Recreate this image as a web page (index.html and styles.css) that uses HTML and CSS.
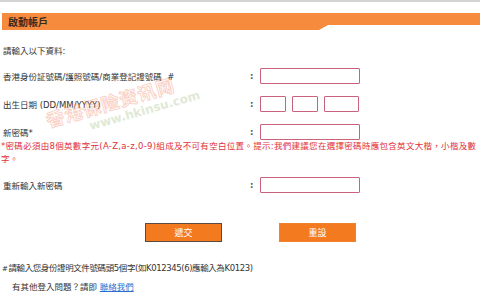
FILE: index.html
```html
<!DOCTYPE html>
<html lang="zh-Hant">
<head>
    <meta charset="UTF-8">
    <meta name="viewport" content="width=device-width, initial-scale=1.0">
    <title>啟動帳戶</title>
    <link rel="stylesheet" href="styles.css">
</head>
<body>
    <div class="topline"></div>
    <div class="page">
        <div class="header"><h2>啟動帳戶</h2></div>
        <p class="intro">請輸入以下資料:</p>
        <form id="activate-form">
            <div class="row">
                <label for="id-no">香港身份証號碼/護照號碼/商業登記證號碼&nbsp; #</label>
                <span class="colon">:</span>
                <input type="text" id="id-no" class="field">
            </div>
            <div class="row">
                <label for="dob-dd">出生日期 (DD/MM/YYYY)</label>
                <span class="colon">:</span>
                <div class="date-group">
                    <input type="text" id="dob-dd" class="field dd">
                    <input type="text" id="dob-mm" class="field mm">
                    <input type="text" id="dob-yy" class="field yy">
                </div>
            </div>
            <div class="row">
                <label for="new-pw">新密碼*</label>
                <span class="colon">:</span>
                <input type="password" id="new-pw" class="field">
            </div>
            <p class="note">*密碼必須由8個英數字元(A-Z,a-z,0-9)組成及不可有空白位置。提示:我們建議您在選擇密碼時應包含英文大楷，小楷及數字。</p>
            <div class="row">
                <label for="re-pw">重新輸入新密碼</label>
                <span class="colon">:</span>
                <input type="password" id="re-pw" class="field">
            </div>
            <div class="buttons">
                <button type="submit" class="btn btn-submit">遞交</button>
                <button type="reset" class="btn">重設</button>
            </div>
        </form>
        <p class="footnote"><span class="hash">#</span>請輸入您身份證明文件號碼頭5個字(如K012345(6)應輸入為K0123)</p>
        <p class="help">有其他登入問題？請即 <a href="#">聯絡我們</a></p>

        <!-- watermark from the source image -->
        <div class="watermark">
            <span class="wm-cn">香港保险资讯网</span>
            <span class="wm-url">www.hkinsu.com</span>
        </div>
    </div>
</body>
</html>
```

FILE: styles.css
```css
body {
    font-family: "DejaVu Sans", "Noto Sans CJK TC", sans-serif;
    font-size: 8.5px;
    color: #333333;
    background-color: #ffffff;
    margin: 0;
    padding: 0;
}

.topline {
    height: 2px;
    background-color: #d4d4d4;
}

.page {
    position: relative;
}

.header {
    margin: 11px 0 0 2px;
    height: 17px;
    background-color: #f68a3d;
    clip-path: polygon(0 0, 100% 0, 100% 12px, 326px 12px, 317px 100%, 0 100%);
}

.header h2 {
    margin: 0;
    padding-left: 6px;
    font-family: "Noto Sans CJK TC", sans-serif;
    font-size: 10px;
    line-height: 17px;
    color: #3a2a1e;
}

.intro {
    margin: 15px 0 0 3px;
    line-height: 13px;
}

.row {
    display: grid;
    grid-template-columns: 245px 12px 1fr;
    align-items: center;
    padding-left: 3px;
    margin-top: 10px;
}

.row + .row {
    margin-top: 12px;
}

.colon {
    padding-left: 2px;
    font-weight: bold;
    color: #555;
}

.field {
    box-sizing: border-box;
    width: 100px;
    height: 16px;
    margin: 0;
    padding: 0 3px;
    border: 1px solid #c9627c;
    border-radius: 1px;
    font-size: 9px;
}

.date-group {
    display: flex;
    gap: 6px;
}

.field.dd { width: 26px; }
.field.mm { width: 26px; }
.field.yy { width: 35px; }

.note {
    margin: 0;
    padding: 0 0 0 1px;
    line-height: 13px;
    letter-spacing: 0.3px;
    color: #e0303c;
}

.note + .row {
    margin-top: 11px;
}

.buttons {
    display: flex;
    gap: 57px;
    padding-left: 145px;
    margin-top: 30px;
}

.btn {
    width: 77px;
    height: 19px;
    padding: 0;
    background-color: #f47a20;
    color: #ffffff;
    border: 1px solid #f0822f;
    font-family: "Noto Sans CJK TC", sans-serif;
    font-size: 9px;
    cursor: pointer;
}

.btn-submit {
    border-color: #5a4a40;
}

.footnote {
    margin: 20px 0 0 2px;
    line-height: 13px;
    letter-spacing: -0.4px;
}

.hash {
    font-size: 7px;
    margin-right: 1px;
}

.help {
    margin: 5px 0 0 12px;
    line-height: 13px;
}

.help a {
    color: #2a6fd0;
}

.watermark {
    position: absolute;
    left: 45px;
    top: 73px;
    width: 150px;
    transform: rotate(-16deg);
    opacity: 0.3;
    pointer-events: none;
}

.wm-cn {
    display: block;
    font-family: "Noto Sans CJK SC", sans-serif;
    font-size: 18px;
    font-weight: bold;
    color: #ffffff;
    -webkit-text-stroke: 1px #f0704a;
    letter-spacing: 1px;
}

.wm-url {
    display: block;
    margin: -2px 0 0 40px;
    font-size: 12px;
    font-weight: bold;
    color: #98b878;
}
```
